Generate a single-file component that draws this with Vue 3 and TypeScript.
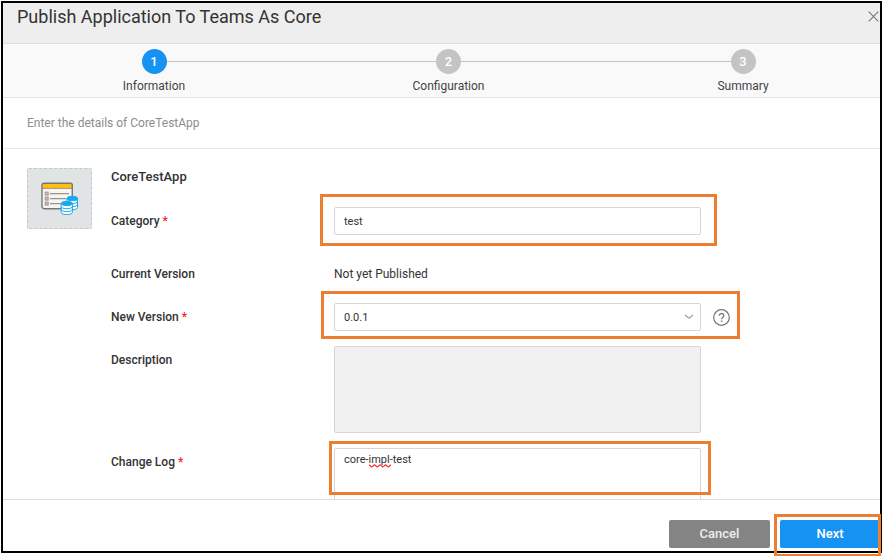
<script setup lang="ts">
import { ref } from 'vue'

interface Step {
  number: number
  label: string
}

const steps: Step[] = [
  { number: 1, label: 'Information' },
  { number: 2, label: 'Configuration' },
  { number: 3, label: 'Summary' },
]
const current = ref(1)
const category = ref('test')
const version = ref('0.0.1')
const description = ref('')
const changeLog = ref('core-impl-test')
</script>

<template>
  <main class="dialog">
    <header class="header">
      <h1>Publish Application To Teams As Core</h1>
      <button class="close" type="button" aria-label="Close">
        <svg width="11" height="11" viewBox="0 0 11 11">
          <path d="M.7.7l9.6 9.6M10.3.7L.7 10.3" fill="none" stroke="#777" stroke-width="1.1" />
        </svg>
      </button>
    </header>

    <ol class="steps">
      <li v-for="s in steps" :key="s.number" class="step" :class="{ active: s.number === current }">
        <span class="dot">{{ s.number }}</span>
        <span class="step-label">{{ s.label }}</span>
      </li>
    </ol>

    <p class="intro">Enter the details of CoreTestApp</p>

    <section class="body">
      <div class="app-icon">
        <svg width="37" height="33" viewBox="0 0 37 33">
          <rect x="1" y="1.200" width="30.300" height="25.500" rx="2" fill="#f7f5f2" />
          <path d="M1.500 6.200V3.200Q1.500 1.500 3.200 1.500h26.100Q31 1.500 31 3.200v3z" fill="#fdc010" />
          <path d="M1.500 6.400h29.500" stroke="#8c8164" stroke-width=".8" />
          <rect x="1" y="1.200" width="30.300" height="25.500" rx="2" fill="none" stroke="#777" stroke-width="1.400" />
          <g fill="#c9c1b8" stroke="#9a9087" stroke-width=".9">
            <rect x="4.200" y="10.100" width="3" height="3" />
            <rect x="4.200" y="15.100" width="3" height="3" />
            <rect x="4.200" y="20.100" width="3" height="3" />
          </g>
          <path d="M9 11.600h19M9 16.600h16M9 21.600h11" stroke="#9d9389" stroke-width="1.200" />
          <g fill="#fff" stroke="#13aaf0" stroke-width="1">
            <path d="M26 16.500v9c0 3 10.500 3 10.500 0v-9" />
            <path d="M26 19.500c0 2.800 10.500 2.800 10.500 0M26 22.500c0 2.800 10.500 2.800 10.500 0" fill="none" />
            <ellipse cx="31.250" cy="16.500" rx="5.250" ry="2.200" fill="#13aaf0" />
            <path d="M20.200 21.500v8.800c0 3 11.200 3 11.200 0v-8.800" />
            <path d="M20.200 24.600c0 2.800 11.200 2.800 11.200 0M20.200 27.500c0 2.800 11.200 2.800 11.200 0" fill="none" />
            <ellipse cx="25.800" cy="21.500" rx="5.600" ry="2.200" fill="#13aaf0" />
          </g>
        </svg>
      </div>

      <form class="form" @submit.prevent>
        <h2 class="name">CoreTestApp</h2>

        <div class="row wide-top">
          <label class="label" for="category">Category <span class="req">*</span></label>
          <div class="field mark mark-category">
            <input id="category" v-model="category" class="control" type="text" />
          </div>
        </div>

        <div class="row text-row">
          <span class="label">Current Version</span>
          <span class="value">Not yet Published</span>
        </div>

        <div class="row version-row">
          <label class="label" for="version">New Version <span class="req">*</span></label>
          <div class="field mark mark-version">
            <select id="version" v-model="version" class="control">
              <option>0.0.1</option>
            </select>
            <svg class="chevron" width="10" height="6" viewBox="0 0 10 6">
              <path d="M1 1l3 2.500q1 .8 2 0L9 1" fill="none" stroke="#a5a5a5" stroke-width="1.500" />
            </svg>
          </div>
          <button class="help" type="button" aria-label="Help">
            <svg width="17" height="17" viewBox="0 0 17 17" fill="none" stroke="#777">
              <circle cx="8.500" cy="8.500" r="7.800" stroke-width="1.200" />
              <path d="M6.300 6.800c0-3 4.500-3 4.500-.2 0 1.900-2.200 1.800-2.200 3.700" stroke-width="1.300" />
              <path d="M8.600 11.500v1.500" stroke-width="1.400" />
            </svg>
          </button>
        </div>

        <div class="row area-row">
          <label class="label" for="description">Description</label>
          <div class="field">
            <textarea id="description" v-model="description" class="control area" disabled></textarea>
          </div>
        </div>

        <div class="row area-row">
          <label class="label" for="changelog">Change Log <span class="req">*</span></label>
          <div class="field mark mark-log">
            <textarea id="changelog" v-model="changeLog" class="control area" spellcheck="false"></textarea>
            <svg class="squiggle" width="22" height="4" viewBox="0 0 22 4">
              <path d="M0 .8l2.800 2.200L5.500.8l2.700 2.200L11 .8l2.700 2.200L16.500.8l2.700 2.200L22 .8" fill="none" stroke="#f53b3b" stroke-width="1.300" />
            </svg>
          </div>
        </div>
      </form>
    </section>

    <footer class="footer">
      <button class="btn cancel" type="button">Cancel</button>
      <span class="mark mark-next"><button class="btn next" type="button">Next</button></span>
    </footer>
  </main>
</template>

<style>
body {
  background: #fff;
}
</style>

<style scoped>
* {
  box-sizing: border-box;
}

.dialog {
  display: flex;
  flex-direction: column;
  height: calc(100vh - 4px);
  margin: 1px 1px 3px;
  border: 2px solid #000;
  background: #fff;
  color: #333;
  font: 13px/18px Roboto, "Liberation Sans", sans-serif;
}

button {
  border: 0;
  padding: 0;
  background: none;
  font: inherit;
  cursor: pointer;
}

svg {
  display: block;
}

.header {
  display: flex;
  justify-content: space-between;
  align-items: flex-start;
  height: 41px;
  padding: 2px 1px 0 14px;
  border-bottom: 1px solid #ddd;
  background: #eee;
}

h1 {
  margin: 0;
  font-size: 18px;
  line-height: 24px;
  font-weight: 400;
}

.close {
  padding-top: 6px;
}

.steps {
  position: relative;
  display: flex;
  justify-content: space-between;
  height: 54px;
  margin: 0;
  padding: 5px 97px 0 111px;
  border-bottom: 1px solid #e4e4e4;
  background: #f9f9f9;
  list-style: none;
}

.steps::before {
  content: "";
  position: absolute;
  top: 17px;
  left: 151px;
  right: 137px;
  border-top: 1px solid #c4c4c4;
}

.step {
  position: relative;
  display: flex;
  flex-direction: column;
  align-items: center;
  width: 80px;
  font-size: 12px;
}

.dot {
  width: 25px;
  height: 25px;
  border-radius: 50%;
  background: #c4c4c4;
  color: #fff;
  font-size: 13px;
  font-weight: 500;
  line-height: 25px;
  text-align: center;
}

.active .dot {
  background: #1693f2;
}

.step-label {
  padding-top: 3px;
  color: #444;
}

.intro {
  margin: 0;
  padding: 16px 24px;
  border-bottom: 1px solid #e9e9e9;
  color: #8d8d8d;
  font-size: 12px;
}

.body {
  flex: 1;
  display: flex;
  gap: 19px;
  min-height: 0;
  padding: 19px 0 0 24px;
  overflow: hidden;
}

.app-icon {
  flex: none;
  display: grid;
  place-items: center;
  width: 65px;
  height: 61px;
  border: 1px dashed #c5c8c8;
  border-radius: 2px;
  background: #e0e4e4;
}

.form {
  flex: 1;
}

.name {
  margin: 0;
  font-size: 13px;
  font-weight: 500;
}

.row {
  display: grid;
  grid-template-columns: 223px minmax(0, 1fr) 179px;
  align-items: center;
  margin-top: 15px;
}

.wide-top {
  margin-top: 21px;
}

.text-row {
  margin-top: 30px;
}

.version-row {
  margin-top: 20px;
}

.area-row {
  align-items: start;
}

.area-row .label {
  padding-top: 5px;
}

.label {
  font-size: 12px;
  font-weight: 500;
}

.value {
  font-size: 12px;
}

.req {
  color: #f22;
}

.field {
  position: relative;
}

.control {
  display: block;
  width: 100%;
  height: 28px;
  margin: 0;
  padding: 0 9px;
  border: 1px solid #d5d5d5;
  border-radius: 2px;
  outline: 0;
  appearance: none;
  background: #fff;
  color: #333;
  font: 11px/16px Roboto, "Liberation Sans", sans-serif;
}

select.control {
  padding-top: 1px;
}

.area {
  height: 87px;
  padding: 3px 9px;
  resize: none;
}

.area:disabled {
  background: #f1f1f1;
}

.chevron {
  position: absolute;
  top: 11px;
  right: 7px;
  pointer-events: none;
}

.squiggle {
  position: absolute;
  top: 16px;
  left: 35px;
}

.help {
  justify-self: start;
  margin-left: 12px;
}

.mark {
  position: relative;
}

.mark::after {
  content: "";
  position: absolute;
  border: 3px solid #ed7d31;
  pointer-events: none;
}

.mark-category::after {
  inset: -13px -16px -11px -14px;
}

.mark-version::after {
  inset: -12px -39px -8px -13px;
}

.mark-log::after {
  inset: -7px -10px 40px -5px;
}

.mark-next::after {
  inset: -6px -1px -6px -6px;
}

.footer {
  display: flex;
  justify-content: flex-end;
  gap: 10px;
  height: 52px;
  padding-top: 20px;
  border-top: 1px solid #ddd;
}

.btn {
  display: block;
  width: 101px;
  height: 28px;
  border-radius: 2px;
  color: #fff;
  font-weight: 500;
}

.cancel {
  background: #848484;
  color: #eee;
}

.next {
  width: 100px;
  background: #1693f2;
}
</style>
